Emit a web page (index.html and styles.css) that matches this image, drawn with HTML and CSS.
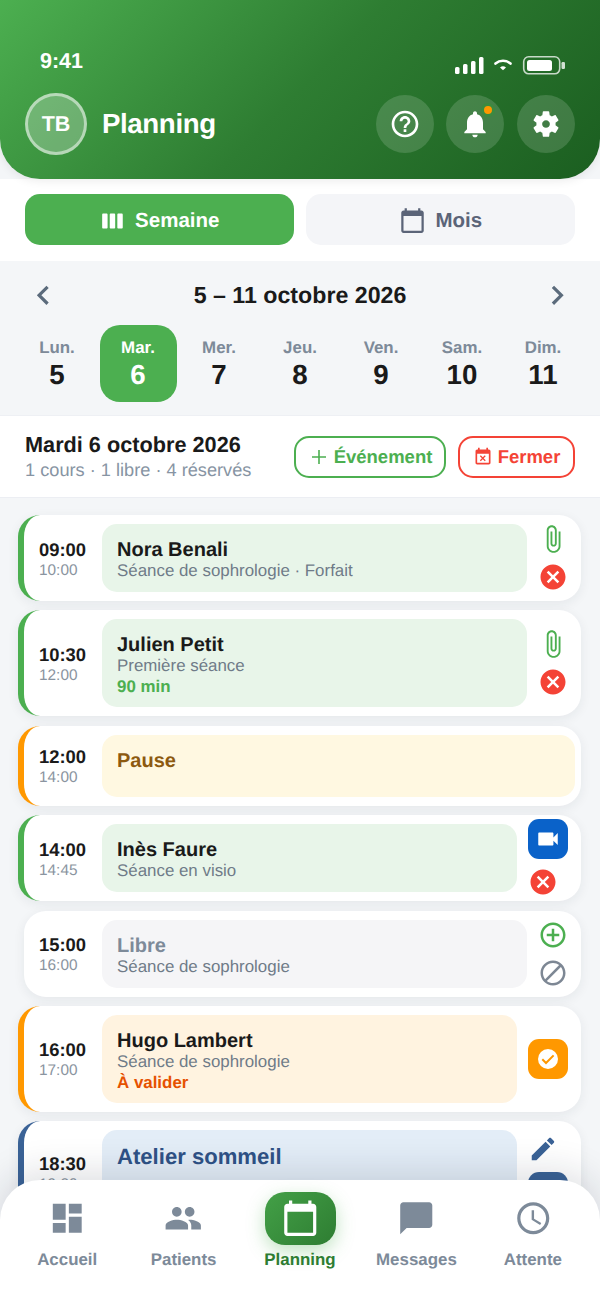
FILE: index.html
```html
<!DOCTYPE html>
<html lang="fr">
<head>
<meta charset="utf-8">
<title>Planning</title>
<link rel="stylesheet" href="styles.css">
</head>
<body>
<svg class="sprite" xmlns="http://www.w3.org/2000/svg">
  <symbol id="i-help" viewBox="0 0 24 24"><path d="M11 18h2v-2h-2v2zm1-16C6.48 2 2 6.48 2 12s4.48 10 10 10 10-4.48 10-10S17.52 2 12 2zm0 18c-4.41 0-8-3.59-8-8s3.59-8 8-8 8 3.59 8 8-3.59 8-8 8zm0-14c-2.21 0-4 1.79-4 4h2c0-1.1.9-2 2-2s2 .9 2 2c0 2-3 1.75-3 5h2c0-2.25 3-2.5 3-5 0-2.21-1.79-4-4-4z"/></symbol>
  <symbol id="i-bell" viewBox="0 0 24 24"><path d="M12 22c1.1 0 2-.9 2-2h-4c0 1.1.89 2 2 2zm6-6v-5c0-3.07-1.64-5.64-4.5-6.32V4c0-.83-.67-1.5-1.5-1.5s-1.5.67-1.5 1.5v.68C7.63 5.36 6 7.92 6 11v5l-2 2v1h16v-1l-2-2z"/></symbol>
  <symbol id="i-gear" viewBox="0 0 24 24"><path d="M19.14 12.94c.04-.3.06-.61.06-.94 0-.32-.02-.64-.07-.94l2.03-1.58c.18-.14.23-.41.12-.61l-1.92-3.32c-.12-.22-.37-.29-.59-.22l-2.39.96c-.5-.38-1.03-.7-1.62-.94l-.36-2.54c-.04-.24-.24-.41-.48-.41h-3.84c-.24 0-.43.17-.47.41l-.36 2.54c-.59.24-1.13.57-1.62.94l-2.39-.96c-.22-.08-.47 0-.59.22L2.74 8.87c-.12.21-.08.47.12.61l2.03 1.58c-.05.3-.09.63-.09.94s.02.64.07.94l-2.03 1.58c-.18.14-.23.41-.12.61l1.92 3.32c.12.22.37.29.59.22l2.39-.96c.5.38 1.03.7 1.62.94l.36 2.54c.05.24.24.41.48.41h3.84c.24 0 .44-.17.47-.41l.36-2.54c.59-.24 1.13-.56 1.62-.94l2.39.96c.22.08.47 0 .59-.22l1.92-3.32c.12-.22.07-.47-.12-.61l-2.01-1.58zM12 14.9c-1.6 0-2.9-1.3-2.9-2.9s1.3-2.9 2.9-2.9 2.9 1.3 2.9 2.9-1.3 2.9-2.9 2.9z"/></symbol>
  <symbol id="i-week" viewBox="0 0 24 24"><path d="M6 5H3c-.55 0-1 .45-1 1v12c0 .55.45 1 1 1h3c.55 0 1-.45 1-1V6c0-.55-.45-1-1-1zm14 0h-3c-.55 0-1 .45-1 1v12c0 .55.45 1 1 1h3c.55 0 1-.45 1-1V6c0-.55-.45-1-1-1zm-7 0h-3c-.55 0-1 .45-1 1v12c0 .55.45 1 1 1h3c.55 0 1-.45 1-1V6c0-.55-.45-1-1-1z"/></symbol>
  <symbol id="i-cal" viewBox="0 0 24 24"><path d="M20 3h-1V1h-2v2H7V1H5v2H4c-1.1 0-2 .9-2 2v16c0 1.1.9 2 2 2h16c1.1 0 2-.9 2-2V5c0-1.1-.9-2-2-2zm0 18H4V8h16v13z"/></symbol>
  <symbol id="i-left" viewBox="0 0 24 24"><path d="M15.41 7.41L14 6l-6 6 6 6 1.41-1.41L10.83 12z"/></symbol>
  <symbol id="i-right" viewBox="0 0 24 24"><path d="M10 6L8.59 7.41 13.17 12l-4.58 4.58L10 18l6-6z"/></symbol>
  <symbol id="i-add" viewBox="0 0 24 24"><path d="M19 12.8h-6.2V19h-1.6v-6.2H5v-1.6h6.2V5h1.6v6.2H19z"/></symbol>
  <symbol id="i-busy" viewBox="0 0 24 24"><path d="M9.31 17l2.44-2.44L14.19 17l1.06-1.06-2.44-2.44 2.44-2.44L14.19 10l-2.44 2.44L9.31 10l-1.06 1.06 2.44 2.44-2.44 2.44L9.31 17zM19 3h-1V1h-2v2H8V1H6v2H5c-1.11 0-1.99.9-1.99 2L3 19c0 1.1.89 2 2 2h14c1.1 0 2-.9 2-2V5c0-1.1-.9-2-2-2zm0 16H5V8h14v11z"/></symbol>
  <symbol id="i-clip" viewBox="0 0 24 24"><path d="M16.5 6v11.5c0 2.21-1.79 4-4 4s-4-1.79-4-4V5c0-1.38 1.12-2.5 2.5-2.5s2.5 1.12 2.5 2.5v10.5c0 .55-.45 1-1 1s-1-.45-1-1V6H10v9.5c0 1.38 1.12 2.5 2.5 2.5s2.5-1.12 2.5-2.5V5c0-2.21-1.79-4-4-4S7 2.79 7 5v12.5c0 3.04 2.46 5.5 5.5 5.5s5.5-2.46 5.5-5.5V6h-1.5z"/></symbol>
  <symbol id="i-cancel" viewBox="0 0 24 24"><path d="M12 2C6.47 2 2 6.47 2 12s4.47 10 10 10 10-4.47 10-10S17.53 2 12 2zm5 13.59L15.59 17 12 13.41 8.41 17 7 15.59 10.59 12 7 8.41 8.41 7 12 10.59 15.59 7 17 8.41 13.41 12 17 15.59z"/></symbol>
  <symbol id="i-video" viewBox="0 0 24 24"><path d="M17 10.5V7c0-.55-.45-1-1-1H4c-.55 0-1 .45-1 1v10c0 .55.45 1 1 1h12c.55 0 1-.45 1-1v-3.5l4 4v-11l-4 4z"/></symbol>
  <symbol id="i-plus-o" viewBox="0 0 24 24"><path d="M13 7h-2v4H7v2h4v4h2v-4h4v-2h-4V7zm-1-5C6.48 2 2 6.48 2 12s4.48 10 10 10 10-4.48 10-10S17.52 2 12 2zm0 18c-4.41 0-8-3.59-8-8s3.59-8 8-8 8 3.59 8 8-3.59 8-8 8z"/></symbol>
  <symbol id="i-block" viewBox="0 0 24 24"><path d="M12 2C6.48 2 2 6.48 2 12s4.48 10 10 10 10-4.48 10-10S17.52 2 12 2zM4 12c0-4.42 3.58-8 8-8 1.85 0 3.55.63 4.9 1.69L5.69 16.9C4.63 15.55 4 13.85 4 12zm8 8c-1.85 0-3.55-.63-4.9-1.69L18.31 7.1C19.37 8.45 20 10.15 20 12c0 4.42-3.58 8-8 8z"/></symbol>
  <symbol id="i-edit" viewBox="0 0 24 24"><path d="M3 17.25V21h3.75L17.81 9.94l-3.75-3.75L3 17.25zM20.71 7.04c.39-.39.39-1.02 0-1.41l-2.34-2.34c-.39-.39-1.02-.39-1.41 0l-1.83 1.83 3.75 3.75 1.83-1.83z"/></symbol>
  <symbol id="i-dash" viewBox="0 0 24 24"><path d="M3 13h8V3H3v10zm0 8h8v-6H3v6zm10 0h8V11h-8v10zm0-18v6h8V3h-8z"/></symbol>
  <symbol id="i-people" viewBox="0 0 24 24"><path d="M16 11c1.66 0 2.99-1.34 2.99-3S17.66 5 16 5c-1.66 0-3 1.34-3 3s1.34 3 3 3zm-8 0c1.66 0 2.99-1.34 2.99-3S9.66 5 8 5C6.34 5 5 6.34 5 8s1.34 3 3 3zm0 2c-2.33 0-7 1.17-7 3.5V19h14v-2.5c0-2.33-4.67-3.5-7-3.5zm8 0c-.29 0-.62.02-.97.05 1.16.84 1.97 1.97 1.97 3.45V19h6v-2.5c0-2.33-4.67-3.5-7-3.5z"/></symbol>
  <symbol id="i-chat" viewBox="0 0 24 24"><path d="M20 2H4c-1.1 0-2 .9-2 2v18l4-4h14c1.1 0 2-.9 2-2V4c0-1.1-.9-2-2-2z"/></symbol>
  <symbol id="i-clock" viewBox="0 0 24 24"><path d="M11.99 2C6.47 2 2 6.48 2 12s4.47 10 9.99 10C17.52 22 22 17.52 22 12S17.52 2 11.99 2zM12 20c-4.42 0-8-3.58-8-8s3.58-8 8-8 8 3.58 8 8-3.58 8-8 8zm.5-13H11v6l5.25 3.15.75-1.23-4.5-2.67z"/></symbol>
</svg>

<div class="app">
  <header class="header">
    <div class="status">
      <span class="clock">9:41</span>
      <svg class="status-icons" viewBox="0 0 110 20" width="110" height="20">
        <rect x="0" y="11" width="4.5" height="7" rx="1.5" fill="#fff"/>
        <rect x="8" y="8" width="4.5" height="10" rx="1.5" fill="#fff"/>
        <rect x="16" y="5" width="4.5" height="13" rx="1.5" fill="#fff"/>
        <rect x="24" y="1" width="4.5" height="17" rx="1.5" fill="#fff"/>
        <path d="M40.5 7.6a11.5 11.5 0 0 1 15 0" fill="none" stroke="#fff" stroke-width="2.6" stroke-linecap="round"/>
        <path d="M45 11.4a5 5 0 0 1 6 0L48 14.2z" fill="#fff"/>
        <rect x="68.7" y="0.8" width="36" height="17" rx="5" fill="none" stroke="#fff" stroke-opacity=".75" stroke-width="1.6"/>
        <rect x="72" y="4" width="25" height="11" rx="2.5" fill="#fff"/>
        <rect x="106.5" y="6" width="3.5" height="7" rx="1.2" fill="#fff" fill-opacity=".8"/>
      </svg>
    </div>
    <div class="titlebar">
      <div class="avatar">TB</div>
      <h1 class="title">Planning</h1>
      <div class="round-actions">
        <span class="round"><svg class="ic32"><use href="#i-help"/></svg></span>
        <span class="round"><svg class="ic32"><use href="#i-bell"/></svg><i class="dot"></i></span>
        <span class="round"><svg class="ic32"><use href="#i-gear"/></svg></span>
      </div>
    </div>
  </header>

  <section class="tabs">
    <div class="tab tab-on"><svg class="ic26"><use href="#i-week"/></svg>Semaine</div>
    <div class="tab tab-off"><svg class="ic27"><use href="#i-cal"/></svg>Mois</div>
  </section>

  <section class="week">
    <div class="week-nav">
      <svg class="chev"><use href="#i-left"/></svg>
      <span class="range">5 – 11 octobre 2026</span>
      <svg class="chev"><use href="#i-right"/></svg>
    </div>
    <div class="days">
      <div class="day"><span class="d-name">Lun.</span><span class="d-num">5</span></div>
      <div class="day day-on"><span class="d-name">Mar.</span><span class="d-num">6</span></div>
      <div class="day"><span class="d-name">Mer.</span><span class="d-num">7</span></div>
      <div class="day"><span class="d-name">Jeu.</span><span class="d-num">8</span></div>
      <div class="day"><span class="d-name">Ven.</span><span class="d-num">9</span></div>
      <div class="day"><span class="d-name">Sam.</span><span class="d-num">10</span></div>
      <div class="day"><span class="d-name">Dim.</span><span class="d-num">11</span></div>
    </div>
  </section>

  <section class="dayhead">
    <div class="dayhead-text">
      <div class="dayhead-title">Mardi 6 octobre 2026</div>
      <div class="dayhead-sub">1 cours · 1 libre · 4 réservés</div>
    </div>
    <div class="dayhead-btns">
      <div class="btn btn-green"><svg class="ic24"><use href="#i-add"/></svg>Événement</div>
      <div class="btn btn-red"><svg class="ic20"><use href="#i-busy"/></svg>Fermer</div>
    </div>
  </section>

  <main class="list">
    <article class="card bar-green">
      <div class="time"><b>09:00</b><span>10:00</span></div>
      <div class="slot slot-green"><div class="name">Nora Benali</div><div class="sub">Séance de sophrologie · Forfait</div></div>
      <div class="acts"><svg class="ic30 c-green"><use href="#i-clip"/></svg><svg class="ic30 c-red"><use href="#i-cancel"/></svg></div>
    </article>
    <article class="card bar-green">
      <div class="time"><b>10:30</b><span>12:00</span></div>
      <div class="slot slot-green"><div class="name">Julien Petit</div><div class="sub">Première séance</div><div class="note n-green">90 min</div></div>
      <div class="acts"><svg class="ic30 c-green"><use href="#i-clip"/></svg><svg class="ic30 c-red"><use href="#i-cancel"/></svg></div>
    </article>
    <article class="card bar-orange card-pause">
      <div class="time"><b>12:00</b><span>14:00</span></div>
      <div class="slot slot-pause"><div class="name n-pause">Pause</div></div>
    </article>
    <article class="card bar-green">
      <div class="time"><b>14:00</b><span>14:45</span></div>
      <div class="slot slot-green"><div class="name">Inès Faure</div><div class="sub">Séance en visio</div></div>
      <div class="acts acts-wide"><span class="sq sq-blue"><svg class="ic26"><use href="#i-video"/></svg></span><svg class="ic30 c-red"><use href="#i-cancel"/></svg></div>
    </article>
    <article class="card card-free">
      <div class="time"><b>15:00</b><span>16:00</span></div>
      <div class="slot slot-free"><div class="name n-free">Libre</div><div class="sub">Séance de sophrologie</div></div>
      <div class="acts"><svg class="ic30 c-green"><use href="#i-plus-o"/></svg><svg class="ic30 c-grey"><use href="#i-block"/></svg></div>
    </article>
    <article class="card bar-orange">
      <div class="time"><b>16:00</b><span>17:00</span></div>
      <div class="slot slot-wait"><div class="name">Hugo Lambert</div><div class="sub">Séance de sophrologie</div><div class="note n-orange">À valider</div></div>
      <div class="acts acts-wide"><span class="sq sq-orange"><svg class="ic24" viewBox="0 0 24 24"><circle cx="12" cy="12" r="10" fill="#fff"/><path d="M6.3 12.3l3.7 3.7 7.6-7.6" fill="none" stroke="#ff9800" stroke-width="2"/></svg></span></div>
    </article>
    <article class="card bar-blue">
      <div class="time"><b>18:30</b><span>19:30</span></div>
      <div class="slot slot-blue"><div class="name n-blue">Atelier sommeil</div></div>
      <div class="acts acts-wide"><svg class="ic30 c-blue"><use href="#i-edit"/></svg><span class="sq sq-navy"></span></div>
    </article>
  </main>

  <nav class="nav">
    <div class="nav-item"><span class="nav-ic"><svg class="ic38"><use href="#i-dash"/></svg></span><span class="nav-label">Accueil</span></div>
    <div class="nav-item"><span class="nav-ic"><svg class="ic38"><use href="#i-people"/></svg></span><span class="nav-label">Patients</span></div>
    <div class="nav-item nav-on"><span class="nav-ic"><svg class="ic38"><use href="#i-cal"/></svg></span><span class="nav-label">Planning</span></div>
    <div class="nav-item"><span class="nav-ic"><svg class="ic38"><use href="#i-chat"/></svg></span><span class="nav-label">Messages</span></div>
    <div class="nav-item"><span class="nav-ic"><svg class="ic38"><use href="#i-clock"/></svg></span><span class="nav-label">Attente</span></div>
  </nav>
</div>
</body>
</html>
```
FILE: styles.css
```css
* { box-sizing: border-box; margin: 0; padding: 0; }
html, body { width: 600px; height: 1300px; overflow: hidden; }
body { font-family: "Liberation Sans", Arial, sans-serif; color: #1a1a1a; background: #fff; text-rendering: geometricPrecision; }
.sprite { display: none; }
svg { fill: currentColor; display: block; flex: none; }
.ic20 { width: 20px; height: 20px; }
.ic24 { width: 24px; height: 24px; }
.ic26 { width: 26px; height: 26px; }
.ic27 { width: 27px; height: 27px; }
.ic30 { width: 30px; height: 30px; }
.ic32 { width: 32px; height: 32px; }
.ic38 { width: 38.5px; height: 38.5px; }

.app { position: relative; width: 600px; height: 1300px; overflow: hidden; display: flex; flex-direction: column; background: #f4f6f8; }

/* Header */
.header { height: 179px; flex: none; padding: 46px 25px 0; color: #fff; background: linear-gradient(135deg, #4caf50 0%, #2e7d32 50%, #1b5e20 100%); border-radius: 0 0 40px 40px; box-shadow: 0 2px 10px rgba(0,0,0,.08); position: relative; z-index: 1; }
.status { height: 30px; display: flex; justify-content: space-between; padding: 0 10px 0 15px; }
.clock { font-size: 21.5px; font-weight: 700; line-height: 30px; }
.status-icons { margin-top: 10px; }
.titlebar { margin-top: 17px; height: 62px; display: flex; align-items: center; }
.avatar { width: 62px; height: 62px; border-radius: 50%; background: rgba(255,255,255,.25); border: 3px solid rgba(255,255,255,.5); display: flex; align-items: center; justify-content: center; font-size: 21.5px; font-weight: 700; }
.title { font-size: 27.7px; font-weight: 700; margin-left: 15px; letter-spacing: -.4px; flex: 1; }
.round-actions { display: flex; gap: 12.7px; }
.round { position: relative; width: 58px; height: 58px; border-radius: 50%; background: rgba(255,255,255,.15); display: flex; align-items: center; justify-content: center; }
.dot { position: absolute; top: 8px; left: 35px; width: 14px; height: 14px; border-radius: 50%; background: #ff9800; border: 3px solid #3b8a40; }

/* Tabs */
.tabs { height: 82px; flex: none; padding: 15px 25px 16px; background: #fff; display: flex; gap: 12px; }
.tab { flex: 1; border-radius: 15px; padding-top: 2px; display: flex; align-items: center; justify-content: center; gap: 9.5px; font-size: 20.5px; font-weight: 700; }
.tab-on { background: #4caf50; color: #fff; }
.tab-off { background: #f4f5f8; color: #5b6478; }

/* Week */
.week { height: 154px; flex: none; padding: 14px 16.5px 0; background: #f4f6f8; }
.week-nav { height: 40px; padding: 0 7.5px; display: flex; align-items: center; justify-content: space-between; }
.chev { width: 38.5px; height: 38.5px; color: #5b6b7c; }
.range { font-size: 23.2px; font-weight: 700; }
.days { margin-top: 10px; display: grid; grid-template-columns: repeat(7, 81px); }
.day { height: 77px; margin: 0 2px; border-radius: 20px; display: flex; flex-direction: column; align-items: center; justify-content: center; }
.d-name { font-size: 16.9px; line-height: 21px; font-weight: 700; color: #7d8a99; }
.d-num { font-size: 27.7px; line-height: 33px; font-weight: 700; }
.day-on { background: #4caf50; color: #fff; }
.day-on .d-name { color: #fff; }

/* Day head */
.dayhead { height: 83px; flex: none; padding: 0 25px; background: #fff; border-bottom: 1px solid #eceef3; border-top: 1px solid #eef0f4; display: flex; align-items: center; justify-content: space-between; }
.dayhead-text { padding-top: 1px; }
.dayhead-title { font-size: 21.7px; line-height: 26px; font-weight: 700; }
.dayhead-sub { font-size: 18.2px; line-height: 24px; color: #8794a3; }
.dayhead-btns { display: flex; gap: 12.5px; }
.btn { height: 42px; border-radius: 15px; border: 2px solid; background: #fff; display: flex; align-items: center; justify-content: center; padding-top: 1px; font-size: 18.5px; font-weight: 700; }
.btn-green { color: #4caf50; width: 152px; gap: 3px; }
.btn-red { color: #f44336; width: 117px; gap: 5px; }

/* List */
.list { flex: 1; padding: 17px 19px 0 18px; display: flex; flex-direction: column; gap: 9.4px; background: #f4f6f8; }
.card { flex: none; display: flex; gap: 11.5px; padding: 9px 13px 9px 0; background: #fff; border-radius: 22px; border-left: 6px solid; box-shadow: 0 3px 12px rgba(30,40,60,.07); }
.bar-green { border-left-color: #4caf50; }
.bar-orange { border-left-color: #ff9800; }
.bar-blue { border-left-color: #3a6296; }
.card-free { border-left: 0; margin-left: 6px; }
.card-pause { padding-right: 6px; }
.time { width: 66.5px; padding-left: 15px; padding-top: 3px; flex: none; align-self: center; display: flex; flex-direction: column; }
.time b { font-size: 18.4px; line-height: 21px; font-weight: 700; }
.time span { font-size: 15.4px; line-height: 21px; color: #8a94a0; }
.slot { flex: 1; min-height: 62px; padding: 14px 15px 11px; border-radius: 15px; }
.slot-green { background: #e8f5e9; }
.slot-pause { background: #fff8e1; }
.slot-free { background: #f5f5f7; }
.slot-wait { background: #fff3e0; }
.slot-blue { background: #e3edf7; min-height: 85px; padding-top: 14px; }
.name { font-size: 20px; line-height: 24px; margin-bottom: -2px; font-weight: 700; }
.n-pause { color: #8d5a10; }
.n-free { color: #7d8a99; }
.n-blue { color: #2f5286; font-size: 22.1px; line-height: 26px; }
.sub { font-size: 16.9px; line-height: 21px; color: #6f7b88; }
.note { font-size: 16.9px; line-height: 22px; margin-bottom: -2px; font-weight: 700; }
.n-green { color: #4caf50; }
.n-orange { color: #e65100; }
.acts { flex: none; align-self: center; display: flex; flex-direction: column; gap: 8px; }
.acts-wide { width: 40px; height: 68px; justify-content: center; }
.c-green { color: #4caf50; }
.c-red { color: #f44336; }
.c-grey { color: #7d8794; }
.c-blue { color: #3a6296; }
.sq { flex: none; width: 40px; height: 40px; border-radius: 11px; display: flex; align-items: center; justify-content: center; color: #fff; }
.sq-blue { background: #0a62c9; }
.sq-orange { background: #ff9800; }
.sq-navy { background: #3a6296; }

/* Bottom nav */
.nav { position: absolute; left: 0; right: 0; bottom: 0; height: 120px; padding: 12px 9px 0; background: #fff; border-radius: 40px 40px 0 0; box-shadow: 0 -8px 36px rgba(20,30,50,.14); display: flex; z-index: 2; }
.nav-item { flex: 1; display: flex; flex-direction: column; align-items: center; color: #7d8a99; }
.nav-ic { width: 71px; height: 53px; border-radius: 20px; display: flex; align-items: center; justify-content: center; }
.nav-label { margin-top: 5px; font-size: 16.9px; line-height: 20px; font-weight: 700; }
.nav-on { color: #2e7d32; }
.nav-on .nav-ic { color: #fff; background: linear-gradient(135deg, #43a047, #2e7d32); box-shadow: 0 6px 18px rgba(76,175,80,.35); }
```
